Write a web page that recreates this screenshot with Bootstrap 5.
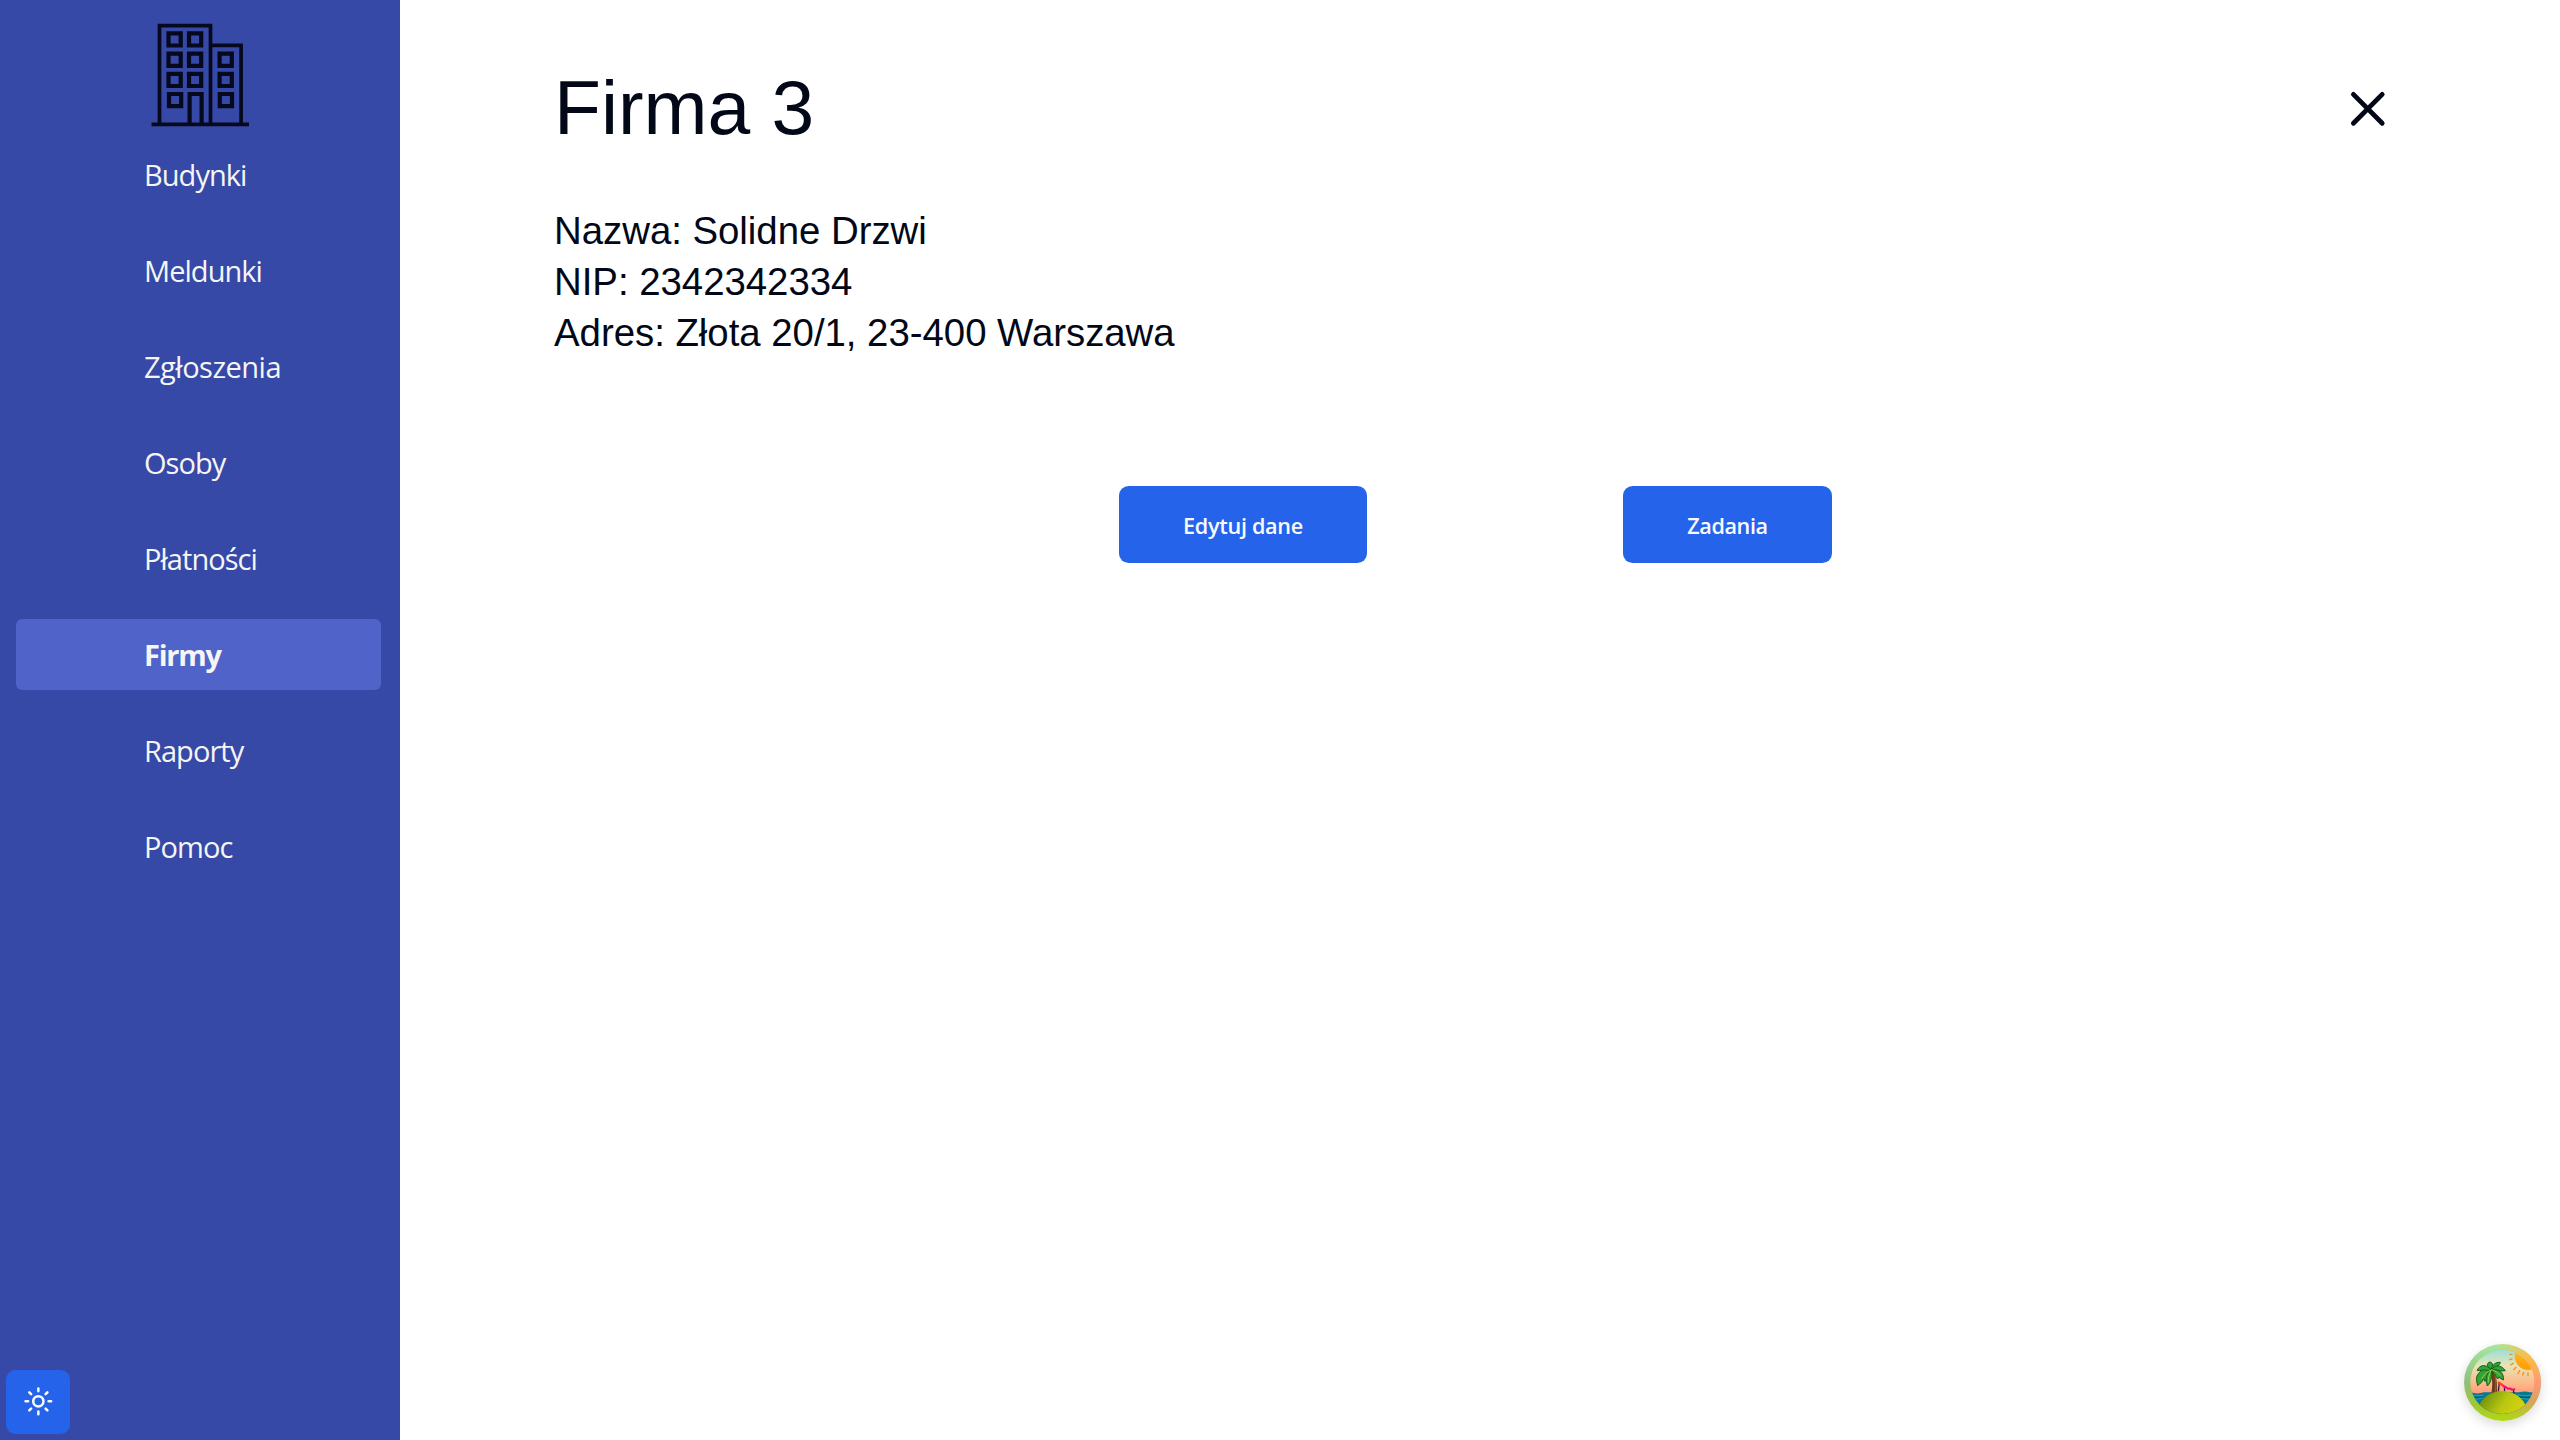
<!DOCTYPE html>
<html lang="pl">
<head>
<meta charset="utf-8">
<meta name="viewport" content="width=device-width, initial-scale=1">
<title>Firma 3</title>
<link href="https://cdn.jsdelivr.net/npm/bootstrap@5.3.0/dist/css/bootstrap.min.css" rel="stylesheet">
<style>
body{font-family:"Open Sans","Noto Sans",sans-serif;color:#020817;background:#fff;overflow:hidden}
.side{width:400px;background:#3649a7;padding:0 19px 6px 16px}
.logo{height:139px;padding-left:114px}
.side .nav{gap:25px}
.side .nav-link{height:71px;padding:0 0 0 128px;border-radius:6px;color:#f5f5f5;font-size:29px;line-height:71px;letter-spacing:-.95px}
.side .nav-link.long-label{letter-spacing:-.5px}
.side .nav-link.active{background:#5063c9;font-weight:700;letter-spacing:-1.25px}
.theme-btn{width:64px;height:64px;margin-left:-10px;border-radius:9.6px}
.theme-btn svg{margin-bottom:1px}
.blue{background:#2563eb;color:#f8fafc;border:0}
.blue:hover{background:#1d4fd0;color:#f8fafc}
.content-area{padding:70px 163px 0 154px;font-family:"Liberation Sans",Arial,sans-serif}
.title{font-size:76.8px;line-height:74.8px;padding-bottom:2px;font-weight:400}
.facts{font-size:38.4px;line-height:51.2px;margin-top:58px;letter-spacing:-.03px}
.close-btn{width:57.6px;height:57.6px;color:#020817}
.actions{gap:256px;margin-top:128px}
.act{height:77px;border-radius:9.6px;font:600 21.6px/77px "Open Sans","Noto Sans",sans-serif;padding:1px 0 0}
.act-edit{width:248px;letter-spacing:-.3px}
.act-tasks{width:209px;letter-spacing:-.4px}
.palm{right:19px;bottom:19px;width:77px;height:77px;border-radius:50%;box-shadow:0 4px 12px rgba(0,0,0,.15)}
</style>
</head>
<body>
<div class="d-flex vh-100">
  <aside class="side d-flex flex-column flex-shrink-0">
    <div class="logo">
      <svg width="140" height="140" viewBox="130 0 140 140" fill="none" stroke="#06081d" stroke-width="3.700">
        <path d="M151.500 124.300h97.500M159.500 124V25.600h51V124M210.400 45.300h30.700V124"/>
        <path stroke-width="4.200" d="M168.500 33.300h12.200v12.200h-12.200zM189 33.300h12.200v12.200H189zM168.500 53.600h12.200v12.200h-12.200zM189 53.600h12.200v12.200H189zM168.500 73.800h12.200V86h-12.200zM189 73.800h12.200V86H189zM169 94h12.200v12.200H169zM219.600 53.600h12.200v12.200h-12.200zM219.600 73.800h12.200V86h-12.200zM219.800 94H232v12.200h-12.200zM189.600 124V94h12v30"/>
      </svg>
    </div>
    <nav class="nav flex-column">
      <a class="nav-link" href="#">Budynki</a>
      <a class="nav-link" href="#">Meldunki</a>
      <a class="nav-link long-label" href="#">Zgłoszenia</a>
      <a class="nav-link" href="#">Osoby</a>
      <a class="nav-link" href="#">Płatności</a>
      <a class="nav-link active" href="#">Firmy</a>
      <a class="nav-link" href="#">Raporty</a>
      <a class="nav-link" href="#">Pomoc</a>
    </nav>
    <button class="btn blue theme-btn mt-auto p-0 d-flex align-items-center justify-content-center" aria-label="Motyw">
      <svg width="30.700" height="30.700" viewBox="0 0 24 24" fill="none" stroke="currentColor" stroke-width="2" stroke-linecap="round"><circle cx="12" cy="12" r="4"/><path d="M12 2v2M12 20v2M4.930 4.930l1.410 1.410M17.660 17.660l1.410 1.410M2 12h2M20 12h2M6.340 17.660l-1.410 1.410M19.070 4.930l-1.410 1.410"/></svg>
    </button>
  </aside>
  <main class="content-area flex-grow-1">
    <div class="d-flex justify-content-between align-items-center">
      <h1 class="title m-0">Firma 3</h1>
      <button class="btn border-0 p-0 d-flex close-btn" aria-label="Zamknij">
        <svg width="57.600" height="57.600" viewBox="0 0 24 24" fill="none" stroke="currentColor" stroke-width="2" stroke-linecap="round"><path d="M18 6 6 18M6 6l12 12"/></svg>
      </button>
    </div>
    <div class="facts">
      <div>Nazwa: Solidne Drzwi</div>
      <div>NIP: 2342342334</div>
      <div>Adres: Złota 20/1, 23-400 Warszawa</div>
    </div>
    <div class="d-flex justify-content-center actions">
      <button class="btn blue act act-edit">Edytuj dane</button>
      <button class="btn blue act act-tasks">Zadania</button>
    </div>
  </main>
</div>
<button class="btn p-0 border-0 position-fixed palm" aria-label="Narzędzia">
  <svg class="d-block" width="77" height="77" viewBox="0 0 231 231">
    <defs>
      <linearGradient id="sky" x2="0" y2="1"><stop offset="0" stop-color="#7fdcea"/><stop offset=".28" stop-color="#e8e5b4"/><stop offset=".55" stop-color="#ffb184"/><stop offset=".75" stop-color="#ff8176"/></linearGradient>
      <linearGradient id="rim" x2="0" y2="1"><stop offset="0" stop-color="#a5e8a0"/><stop offset=".5" stop-color="#8fbf7c"/><stop offset=".8" stop-color="#9fc832"/><stop offset="1" stop-color="#b2d912"/></linearGradient>
      <linearGradient id="warm" x2="0" y2="1"><stop offset="0" stop-color="#ffc552"/><stop offset=".22" stop-color="#ffb746"/><stop offset=".52" stop-color="#ff987a"/><stop offset=".75" stop-color="#d5a45c"/><stop offset="1" stop-color="#b2d912"/></linearGradient>
      <linearGradient id="fade"><stop offset=".4" stop-color="#000"/><stop offset=".85" stop-color="#fff"/></linearGradient>
      <mask id="east"><rect width="231" height="231" fill="url(#fade)"/></mask>
      <linearGradient id="isle" x1="0" x2="1" y2=".6"><stop offset="0" stop-color="#567d10"/><stop offset=".5" stop-color="#b8c711"/><stop offset="1" stop-color="#e4dc08"/></linearGradient>
      <linearGradient id="sun" x2="0" y2="1"><stop offset="0" stop-color="#ffc13c"/><stop offset="1" stop-color="#ff9d00"/></linearGradient>
      <clipPath id="scene"><circle cx="115" cy="114" r="96"/></clipPath>
    </defs>
    <circle cx="115.500" cy="115.500" r="115.500" fill="url(#rim)"/>
    <circle cx="115.500" cy="115.500" r="115.500" fill="url(#warm)" mask="url(#east)"/>
    <g clip-path="url(#scene)">
      <rect width="231" height="231" fill="url(#sky)"/>
      <circle cx="193" cy="37" r="41" fill="url(#sun)"/>
      <g stroke="#ff8b1c" stroke-width="4" stroke-linecap="round"><path d="M144 31h-6M144 45l-7 2M148 58l-8 5M156 70l-7 7M167 80l-5 9M179 85l-3 8M192 87v8"/></g>
      <path d="M0 144q18 0 30 3t30-2h105q18-5 32 0h34v86H0z" fill="#08798f"/>
      <path d="M10 153q24 5 48 1M17 163q20 5 38 0M160 153q26 5 54 0M172 163q20 5 40 0" stroke="#0bb1bd" stroke-width="3" fill="none"/>
      <path d="M20 158q20 5 35 0M165 158q20 5 45 0" stroke="#034d68" stroke-width="3" fill="none"/>
      <path d="M78 79l10-2c9 18 13 43 11 72H82c5-28 3-50-4-70z" fill="#6c3b1b"/>
      <path d="M90 84c6 20 7 42 4 62" stroke="#a05a26" stroke-width="4" fill="none"/>
      <g fill="#34a332" stroke="#126125" stroke-width="3" stroke-linejoin="round">
        <path d="M82 78C66 70 50 75 39 96c-4 10 0 18 2 29 8-8 14-9 17-21l5 8c6-8 11-22 19-34z"/>
        <path d="M82 78c-17 9-18 27-12 48 10-9 16-27 12-48z"/>
        <path d="M82 77C65 60 49 61 39 79c9 3 16-2 24-1 8 1 12 2 19-1z"/>
        <path d="M82 77C67 66 67 58 78 54c10 3 10 13 4 23z"/>
        <path d="M82 77c2-15 13-23 27-22-2 11-14 15-27 22z"/>
        <path d="M82 77c12-15 29-16 42 3-12 4-28-4-42-3z"/>
        <path d="M82 77c25-3 39 12 36 31-6-3-9-4-13-9l-4 6C96 96 89 86 82 77z"/>
      </g>
      <path d="M82 78c-12 4-22 14-30 28M82 77c-8 16-10 28-9 39M82 77c12 3 20 10 27 18" stroke="#91d548" stroke-width="3" fill="none"/>
      <path d="M106 117l-3 26M121 130l1 12M148 137l2 12" stroke="#39152f" stroke-width="4"/>
      <path d="M104 116q7 3 14 10l7 3q7 8 13 4l6 4 7-1" fill="none" stroke="#ef117b" stroke-width="6" stroke-linecap="round"/>
      <path d="M104 116l12 8" stroke="#f5472e" stroke-width="6" stroke-linecap="round"/>
      <ellipse cx="115" cy="211" rx="76" ry="70" fill="url(#isle)"/>
    </g>
  </svg>
</button>
<script src="https://cdn.jsdelivr.net/npm/bootstrap@5.3.0/dist/js/bootstrap.bundle.min.js"></script>
</body>
</html>
